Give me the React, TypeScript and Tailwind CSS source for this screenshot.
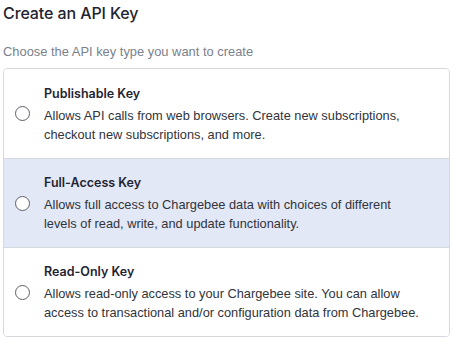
const options = [
  {
    id: "publishable",
    title: "Publishable Key",
    lines: [
      "Allows API calls from web browsers. Create new subscriptions,",
      "checkout new subscriptions, and more.",
    ],
  },
  {
    id: "full",
    title: "Full-Access Key",
    lines: [
      "Allows full access to Chargebee data with choices of different",
      "levels of read, write, and update functionality.",
    ],
  },
  {
    id: "read",
    title: "Read-Only Key",
    lines: [
      "Allows read-only access to your Chargebee site. You can allow",
      "access to transactional and/or configuration data from Chargebee.",
    ],
  },
];

export default function App() {
  const hovered = "full";

  return (
    <div className="w-[454px] h-[342px] bg-white px-[3px] pt-[2px] font-['Liberation_Sans',Arial,sans-serif] text-[#1f2430]">
      <h1 className="text-[16px] leading-[22px] font-medium font-['Inter',sans-serif] tracking-[-0.1px]">
        Create an API Key
      </h1>
      <p className="mt-[19px] text-[12.9px] leading-[18px] text-[#7a7f8c]">
        Choose the API key type you want to create
      </p>
      <div className="mt-[7px] w-[447px] rounded-[4px] border border-[#d5d8de] overflow-hidden">
        {options.map((opt, i) => (
          <label
            key={opt.id}
            className={`flex items-center h-[89px] pl-[11px] ${
              i > 0 ? "border-t border-[#d5d8de]" : ""
            } ${opt.id === hovered ? "bg-[#e3e8f6]" : "bg-white"}`}
          >
            <span className="w-[15px] h-[15px] rounded-full border border-[#5c6068] bg-white shrink-0" />
            <div className="ml-[14px] flex flex-col">
              <span className="text-[12.5px] leading-[19px] font-semibold font-['Inter',sans-serif] text-[#1f2430]">
                {opt.title}
              </span>
              <span className="mt-[3px] text-[12.8px] leading-[19px] text-[#30343c]">
                {opt.lines[0]}
                <br />
                {opt.lines[1]}
              </span>
            </div>
          </label>
        ))}
      </div>
    </div>
  );
}
